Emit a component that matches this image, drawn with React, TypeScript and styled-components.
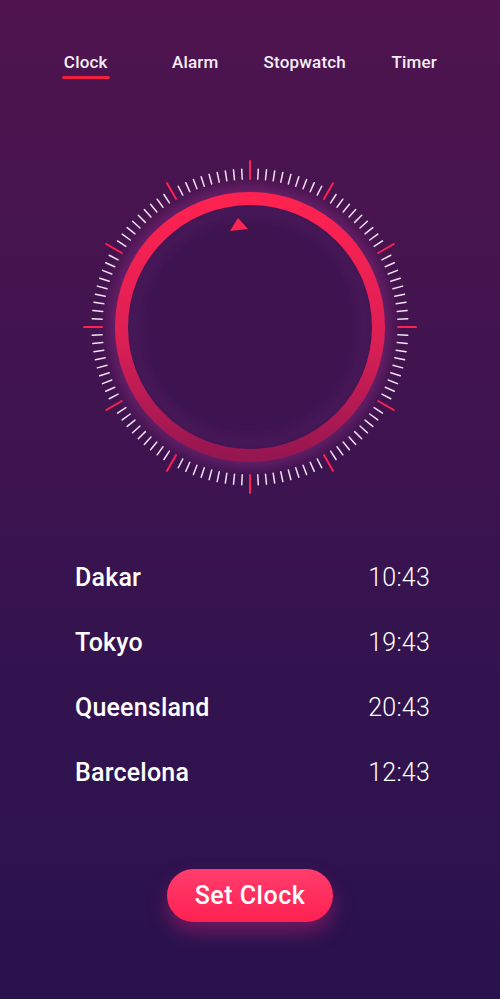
import React, { FC } from 'react';
import styled, { createGlobalStyle } from 'styled-components';

/* ---------- STYLES ---------- */

const GlobalStyle = createGlobalStyle`
    body {
        margin: 0;
        background: #2a124e;
        font-family: Roboto, 'Liberation Sans', sans-serif;
    }
`;

const SPage = styled.div`
    width: 500px;
    min-height: 999px;
    display: flex;
    flex-direction: column;
    align-items: stretch;
    background: linear-gradient(180deg, #4f144f 0%, #40144f 40%, #34134f 65%, #29124d 100%);
    color: #ffffff;
`;

const SNav = styled.nav`
    display: grid;
    grid-template-columns: repeat(4, 1fr);
    padding: 0 31px;
    margin-top: 52px;
`;

const STab = styled.div<{ active?: boolean }>`
    justify-self: center;
    display: flex;
    flex-direction: column;
    align-items: center;
    font-size: 17px;
    font-weight: 500;
    line-height: 21px;
    letter-spacing: 0.2px;
    color: #f6eef6;

    &::after {
        content: '';
        display: block;
        width: calc(100% + 4px);
        height: 3px;
        margin-top: 3px;
        border-radius: 2px;
        background: ${(p) => (p.active ? '#f0203e' : 'transparent')};
    }
`;

const SDial = styled.div`
    display: flex;
    justify-content: center;
    margin-top: 78px;
`;

const SList = styled.ul`
    list-style: none;
    margin: 48px 0 0;
    padding: 0 70px 0 75px;
`;

const SRow = styled.li`
    height: 65px;
    display: flex;
    align-items: center;
    justify-content: space-between;
    font-size: 25px;
`;

const SCity = styled.span`
    font-weight: 500;
    letter-spacing: 0.2px;
`;

const STime = styled.span`
    font-weight: 300;
    letter-spacing: 0.2px;
`;

const SButtonContainer = styled.div`
    display: flex;
    justify-content: center;
    margin-top: 64px;
`;

const SButton = styled.button`
    width: 166px;
    height: 53px;
    border: none;
    border-radius: 27px;
    background: linear-gradient(180deg, #ff3d6c 0%, #ff2152 100%);
    box-shadow: 0 10px 18px rgba(170, 30, 110, 0.55);
    color: #ffffff;
    font-family: inherit;
    font-size: 25px;
    font-weight: 500;
    letter-spacing: 0.5px;
    cursor: pointer;
`;

/* ---------- COMPONENT ---------- */

const cities = [
    { name: 'Dakar', time: '10:43' },
    { name: 'Tokyo', time: '19:43' },
    { name: 'Queensland', time: '20:43' },
    { name: 'Barcelona', time: '12:43' },
];

const tabs = ['Clock', 'Alarm', 'Stopwatch', 'Timer'];

const Dial: FC = () => {
    const c = 170;
    const ticks = Array.from({ length: 120 }, (_, i) => {
        const major = i % 10 === 0;
        const a = (i * 3 * Math.PI) / 180;
        const r1 = 148;
        const r2 = major ? 166 : 158;
        return (
            <line
                key={i}
                x1={c + r1 * Math.sin(a)}
                y1={c - r1 * Math.cos(a)}
                x2={c + r2 * Math.sin(a)}
                y2={c - r2 * Math.cos(a)}
                stroke={major ? '#ff2150' : '#f3e6f3'}
                strokeWidth={major ? 2 : 1.5}
                strokeLinecap="round"
            />
        );
    });

    return (
        <svg width="340" height="340" viewBox="0 0 340 340">
            <defs>
                <linearGradient id="ring" x1="0" y1="0" x2="0" y2="1">
                    <stop offset="0%" stopColor="#ff2250" />
                    <stop offset="55%" stopColor="#dc1f55" />
                    <stop offset="100%" stopColor="#961651" />
                </linearGradient>
                <filter id="glow" x="-30%" y="-30%" width="160%" height="160%">
                    <feGaussianBlur stdDeviation="7" />
                </filter>
            </defs>
            {ticks}
            <circle cx={c} cy={c} r={131} fill="none" stroke="#8a2a80" strokeWidth={20} opacity={0.55} filter="url(#glow)" />
            <circle cx={c} cy={c} r={122} fill="#3d1450" />
            <circle cx={c} cy={c} r={116} fill="none" stroke="#6a2070" strokeWidth={8} opacity={0.45} filter="url(#glow)" />
            <circle cx={c} cy={c} r={128.5} fill="none" stroke="url(#ring)" strokeWidth={13} />
            <polygon points="158,61 150,74 168,72" fill="#ff2452" strokeLinejoin="round" />
        </svg>
    );
};

const App: FC = () => (
    <>
        <GlobalStyle />
        <SPage>
            <SNav>
                {tabs.map((tab) => (
                    <STab key={tab} active={tab === 'Clock'}>
                        {tab}
                    </STab>
                ))}
            </SNav>
            <SDial>
                <Dial />
            </SDial>
            <SList>
                {cities.map((city) => (
                    <SRow key={city.name}>
                        <SCity>{city.name}</SCity>
                        <STime>{city.time}</STime>
                    </SRow>
                ))}
            </SList>
            <SButtonContainer>
                <SButton>Set Clock</SButton>
            </SButtonContainer>
        </SPage>
    </>
);

export default App;
